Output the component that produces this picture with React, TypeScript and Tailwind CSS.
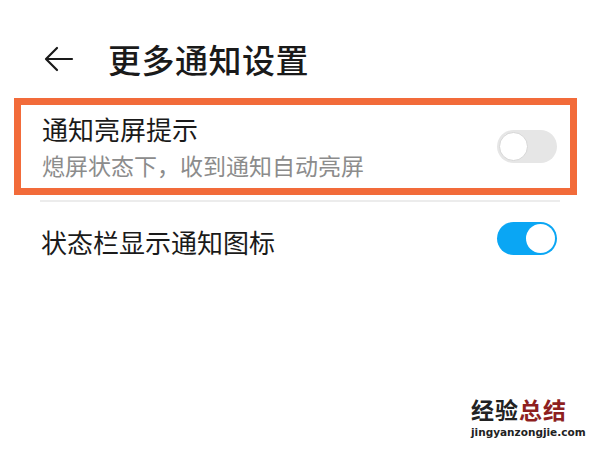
import React from 'react';

const font = { fontFamily: '"Noto Sans CJK SC", "Noto Sans", sans-serif' };

function Toggle({ on }: { on: boolean }) {
  return (
    <div
      className={`w-[60px] h-[33px] rounded-full p-[2px] flex items-center ${
        on ? 'bg-[#0aa6f4] justify-end' : 'bg-[#e6e6e6] justify-start'
      }`}
    >
      <div
        className={`w-[29px] h-[29px] rounded-full bg-white ${
          on ? '' : 'border-[1.5px] border-[#d6d6d6]'
        }`}
      />
    </div>
  );
}

export default function App() {
  return (
    <div className="w-[600px] h-[450px] bg-white relative overflow-hidden text-[#1a1a1a]" style={font}>
      {/* header */}
      <div className="h-[98px] flex items-center pl-[44px] pt-[20px]">
        <svg width="30" height="26" viewBox="0 0 30 26" fill="none" stroke="#1a1a1a" strokeWidth="2.2" strokeLinecap="round" strokeLinejoin="round">
          <path d="M28 13H3" />
          <path d="M13 2L2 13l11 11" />
        </svg>
        <h1 className="ml-[34px] text-[33px] leading-none font-medium tracking-[0.5px]">更多通知设置</h1>
      </div>

      {/* highlighted row */}
      <div className="ml-[14px] w-[563px] h-[97px] border-[7px] border-[#f26b3a] flex items-center pl-[21px] pr-[13px]">
        <div className="flex-1 flex flex-col">
          <span className="text-[26px] leading-none">通知亮屏提示</span>
          <span className="mt-[12px] text-[23px] leading-none text-[#8c8c8c]">熄屏状态下，收到通知自动亮屏</span>
        </div>
        <Toggle on={false} />
      </div>

      <div className="ml-[40px] w-[520px] h-[2px] mt-[5px] bg-[#ececec]" />

      {/* second row */}
      <div className="h-[80px] -mt-[2px] flex items-start pt-[22px] pl-[41px] pr-[43px]">
        <span className="flex-1 text-[26px] leading-none pt-[7px]">状态栏显示通知图标</span>
        <Toggle on={true} />
      </div>

      {/* watermark */}
      <div className="absolute left-[471px] top-[398px] flex flex-col items-start">
        <div className="text-[23px] leading-none font-bold tracking-[1px]">
          <span className="text-[#222]">经验</span>
          <span className="text-[#8e1f1f]">总结</span>
        </div>
        <div className="mt-[6px] text-[10.5px] leading-none font-bold text-[#222]" style={{ fontFamily: '"DejaVu Sans", sans-serif' }}>
          jingyanzongjie.com
        </div>
      </div>
    </div>
  );
}
